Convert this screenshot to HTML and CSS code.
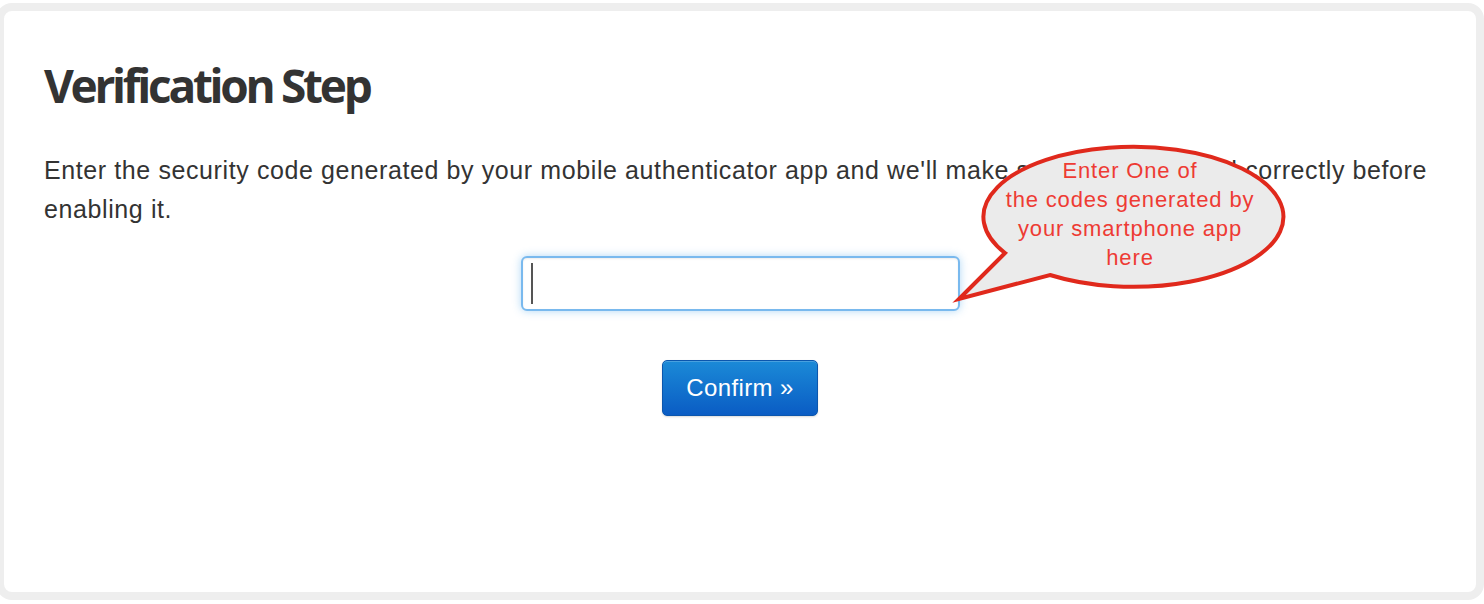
FILE: index.html
```html
<!DOCTYPE html>
<html>
<head>
<meta charset="utf-8">
<link rel="stylesheet" href="styles.css">
</head>
<body>
<div class="page">
  <div class="card">
    <h1 class="title">Verification Step</h1>
    <p class="lead">Enter the security code generated by your mobile authenticator app and we'll make sure it's configured correctly before enabling it.</p>
    <div class="form">
      <div class="field">
        <div class="input"><span class="caret"></span></div>
      </div>
      <button class="btn">Confirm »</button>
    </div>
    <div class="bubble">
      <svg class="bubble-shape" width="340" height="170" viewBox="0 0 340 170">
        <path d="M55 115 L9 161 L100 137 A150 70 0 1 0 55 115 Z" fill="#ebebeb" stroke="#e0291c" stroke-width="4" stroke-linejoin="miter"/>
      </svg>
      <div class="bubble-text">Enter One of<br>the codes generated by<br>your smartphone app<br>here</div>
    </div>
  </div>
</div>
</body>
</html>
```
FILE: styles.css
```css
html, body {
  margin: 0;
  padding: 0;
  background: #ffffff;
  overflow: hidden;
}
.page {
  padding-top: 3px;
  width: 1484px;
  height: 604px;
  overflow: hidden;
}
.card {
  position: relative;
  box-sizing: border-box;
  margin-left: -4px;
  width: 1488px;
  height: 597px;
  border: 8px solid #eeeeee;
  border-radius: 16px;
  background: #fff;
  padding: 46px 40px 0 40px;
}
.title {
  margin: 0;
  font-family: "Open Sans", "DejaVu Sans", sans-serif;
  font-weight: 700;
  font-size: 46px;
  line-height: 56px;
  letter-spacing: -3.3px;
  color: #333333;
}
.lead {
  margin: 38px 0 0 0;
  font-family: "Liberation Sans", Arial, sans-serif;
  font-size: 25px;
  line-height: 39px;
  letter-spacing: 0.6px;
  color: #333333;
}
.form {
  display: flex;
  flex-direction: column;
  align-items: center;
  margin-top: 27px;
}
.input {
  box-sizing: border-box;
  width: 439px;
  height: 55px;
  border: 2px solid #79b9ee;
  border-radius: 6px;
  background: #fff;
  box-shadow: 0 0 8px rgba(82, 168, 236, 0.45), inset 0 1px 2px rgba(0,0,0,0.08);
  padding: 5px 0 0 8px;
}
.caret {
  display: block;
  width: 2px;
  height: 41px;
  background: #555;
}
.btn {
  margin-top: 49px;
  box-sizing: border-box;
  width: 156px;
  height: 56px;
  border: 1px solid #0b56ad;
  border-radius: 5px;
  background: linear-gradient(#1b8ad7, #0a5cc4);
  color: #fff;
  font-family: "Liberation Sans", Arial, sans-serif;
  font-size: 24px;
  letter-spacing: 0.4px;
  padding: 0;
  box-shadow: inset 0 1px 0 rgba(255,255,255,0.2), 0 1px 2px rgba(0,0,0,0.15);
}
.bubble {
  position: absolute;
  left: 946px;
  top: 127px;
  width: 340px;
  height: 170px;
}
.bubble-shape {
  position: absolute;
  left: 0;
  top: 0;
}
.bubble-text {
  position: absolute;
  left: 30px;
  top: 18px;
  width: 300px;
  text-align: center;
  font-family: "Liberation Sans", Arial, sans-serif;
  font-size: 22px;
  line-height: 29px;
  letter-spacing: 0.85px;
  color: #ee3b34;
}
```
